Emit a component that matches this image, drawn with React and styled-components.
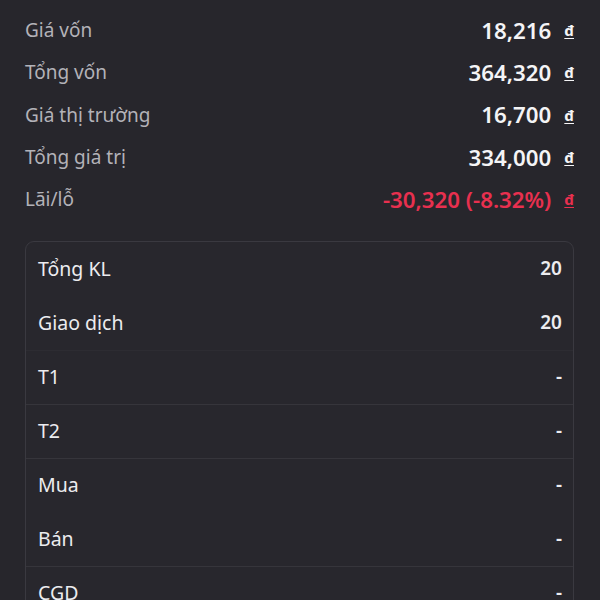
import React from "react";
import styled, { createGlobalStyle } from "styled-components";

const Global = createGlobalStyle`
  body {
    margin: 0;
    background: #27262c;
    font-family: "Noto Sans", "Open Sans", sans-serif;
  }
`;

const Page = styled.div`
  padding: 9px 26px 0 25px;
  width: 600px;
  height: 600px;
  box-sizing: border-box;
  overflow: hidden;
`;

const Summary = styled.div`
  display: flex;
  flex-direction: column;
`;

const SumRow = styled.div`
  display: flex;
  justify-content: space-between;
  align-items: center;
  height: 42.3px;
`;

const Label = styled.span`
  font-size: 19px;
  color: #b3b2b8;
`;

const Value = styled.span`
  display: flex;
  align-items: center;
  gap: 13px;
  font-size: 22.3px;
  font-weight: 600;
  color: ${(p) => (p.$loss ? "#e8304f" : "#f4f4f6")};
`;

const Currency = styled.span`
  font-size: 15px;
  font-weight: 700;
  text-decoration: underline;
  text-underline-offset: 2px;
`;

const Card = styled.div`
  margin-top: 21px;
  border: 1px solid #3a3940;
  border-radius: 9px;
  background: #28272d;
`;

const Row = styled.div`
  display: flex;
  justify-content: space-between;
  align-items: center;
  height: 54px;
  padding: 0 11px 3px 12px;
  font-size: 19.5px;
  color: #ececef;
  border-top: 1px solid ${(p) => (p.$line ? p.$line : "transparent")};
  box-sizing: border-box;
`;

const Num = styled.span`
  font-weight: 600;
  font-size: 19px;
`;

const summary = [
  ["Giá vốn", "18,216"],
  ["Tổng vốn", "364,320"],
  ["Giá thị trường", "16,700"],
  ["Tổng giá trị", "334,000"],
  ["Lãi/lỗ", "-30,320 (-8.32%)", true],
];

const rows = [
  ["Tổng KL", "20", null],
  ["Giao dịch", "20", null],
  ["T1", "-", "#2d2c32"],
  ["T2", "-", "#36353b"],
  ["Mua", "-", "#36353b"],
  ["Bán", "-", null],
  ["CGD", "-", "#36353b"],
];

export default function App() {
  return (
    <>
      <Global />
      <Page>
        <Summary>
          {summary.map(([l, v, loss]) => (
            <SumRow key={l}>
              <Label>{l}</Label>
              <Value $loss={loss}>
                {v}
                <Currency>đ</Currency>
              </Value>
            </SumRow>
          ))}
        </Summary>
        <Card>
          {rows.map(([l, v, line]) => (
            <Row key={l} $line={line}>
              <span>{l}</span>
              <Num>{v}</Num>
            </Row>
          ))}
        </Card>
      </Page>
    </>
  );
}
